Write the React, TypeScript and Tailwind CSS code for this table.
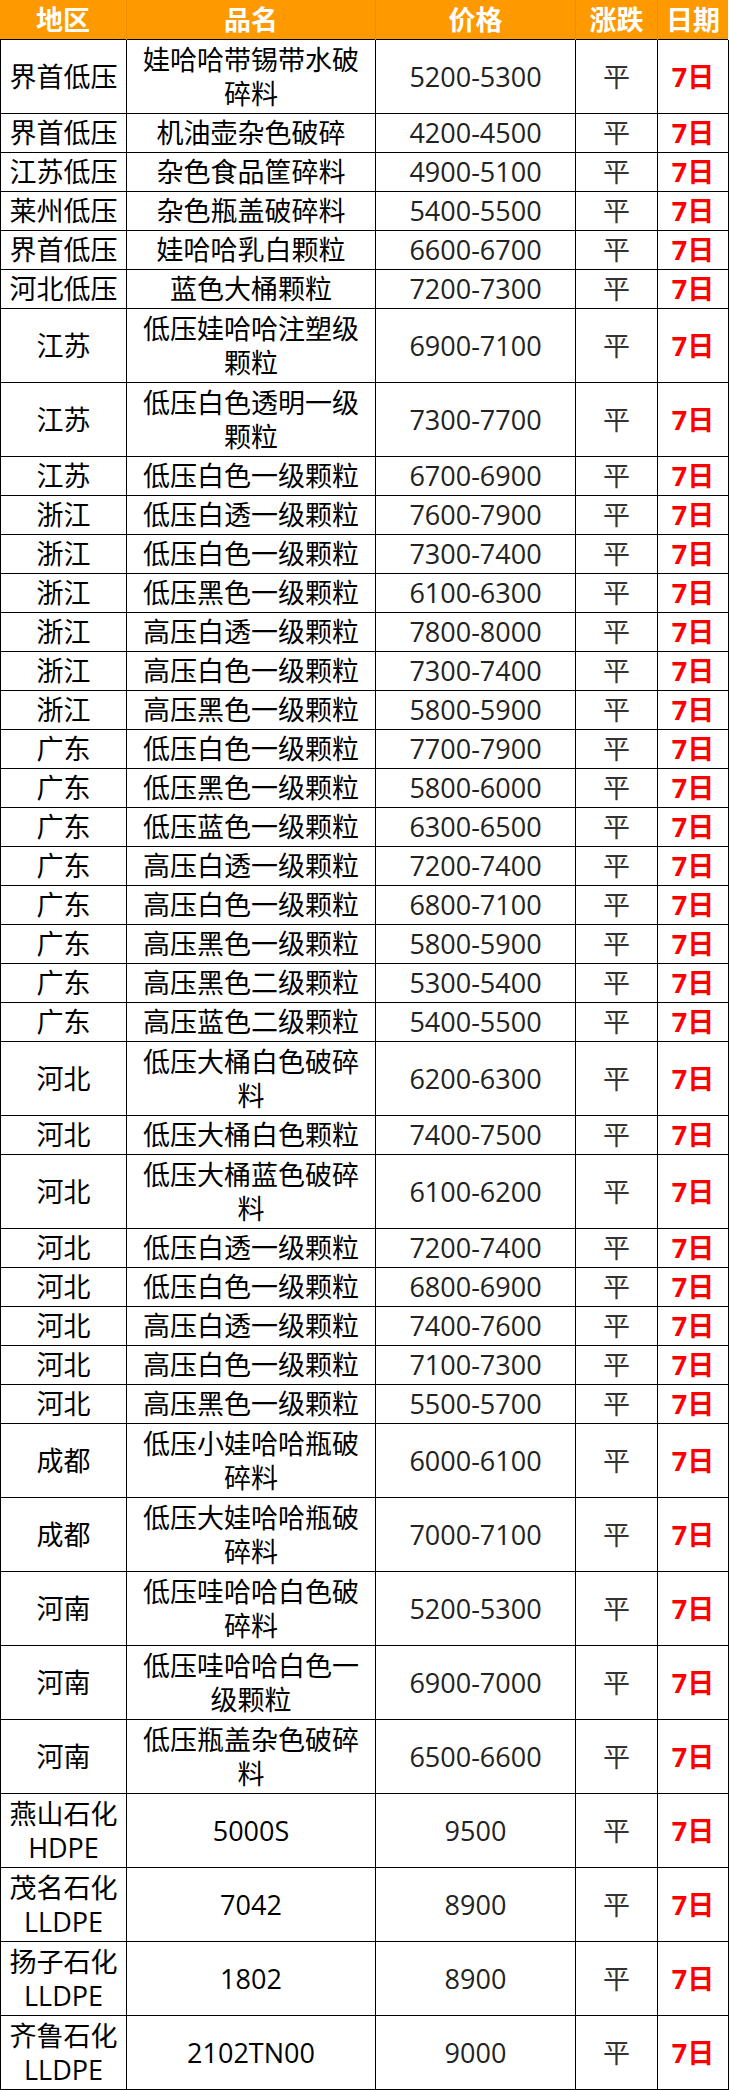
import React from "react";

type Row = { r: string[]; n: string[]; p: string; d?: boolean };

const rows: Row[] = [
  { r: ["界首低压"], n: ["娃哈哈带锡带水破", "碎料"], p: "5200-5300", d: true },
  { r: ["界首低压"], n: ["机油壶杂色破碎"], p: "4200-4500" },
  { r: ["江苏低压"], n: ["杂色食品筐碎料"], p: "4900-5100" },
  { r: ["莱州低压"], n: ["杂色瓶盖破碎料"], p: "5400-5500" },
  { r: ["界首低压"], n: ["娃哈哈乳白颗粒"], p: "6600-6700" },
  { r: ["河北低压"], n: ["蓝色大桶颗粒"], p: "7200-7300" },
  { r: ["江苏"], n: ["低压娃哈哈注塑级", "颗粒"], p: "6900-7100", d: true },
  { r: ["江苏"], n: ["低压白色透明一级", "颗粒"], p: "7300-7700", d: true },
  { r: ["江苏"], n: ["低压白色一级颗粒"], p: "6700-6900" },
  { r: ["浙江"], n: ["低压白透一级颗粒"], p: "7600-7900" },
  { r: ["浙江"], n: ["低压白色一级颗粒"], p: "7300-7400" },
  { r: ["浙江"], n: ["低压黑色一级颗粒"], p: "6100-6300" },
  { r: ["浙江"], n: ["高压白透一级颗粒"], p: "7800-8000" },
  { r: ["浙江"], n: ["高压白色一级颗粒"], p: "7300-7400" },
  { r: ["浙江"], n: ["高压黑色一级颗粒"], p: "5800-5900" },
  { r: ["广东"], n: ["低压白色一级颗粒"], p: "7700-7900" },
  { r: ["广东"], n: ["低压黑色一级颗粒"], p: "5800-6000" },
  { r: ["广东"], n: ["低压蓝色一级颗粒"], p: "6300-6500" },
  { r: ["广东"], n: ["高压白透一级颗粒"], p: "7200-7400" },
  { r: ["广东"], n: ["高压白色一级颗粒"], p: "6800-7100" },
  { r: ["广东"], n: ["高压黑色一级颗粒"], p: "5800-5900" },
  { r: ["广东"], n: ["高压黑色二级颗粒"], p: "5300-5400" },
  { r: ["广东"], n: ["高压蓝色二级颗粒"], p: "5400-5500" },
  { r: ["河北"], n: ["低压大桶白色破碎", "料"], p: "6200-6300", d: true },
  { r: ["河北"], n: ["低压大桶白色颗粒"], p: "7400-7500" },
  { r: ["河北"], n: ["低压大桶蓝色破碎", "料"], p: "6100-6200", d: true },
  { r: ["河北"], n: ["低压白透一级颗粒"], p: "7200-7400" },
  { r: ["河北"], n: ["低压白色一级颗粒"], p: "6800-6900" },
  { r: ["河北"], n: ["高压白透一级颗粒"], p: "7400-7600" },
  { r: ["河北"], n: ["高压白色一级颗粒"], p: "7100-7300" },
  { r: ["河北"], n: ["高压黑色一级颗粒"], p: "5500-5700" },
  { r: ["成都"], n: ["低压小娃哈哈瓶破", "碎料"], p: "6000-6100", d: true },
  { r: ["成都"], n: ["低压大娃哈哈瓶破", "碎料"], p: "7000-7100", d: true },
  { r: ["河南"], n: ["低压哇哈哈白色破", "碎料"], p: "5200-5300", d: true },
  { r: ["河南"], n: ["低压哇哈哈白色一", "级颗粒"], p: "6900-7000", d: true },
  { r: ["河南"], n: ["低压瓶盖杂色破碎", "料"], p: "6500-6600", d: true },
  { r: ["燕山石化", "HDPE"], n: ["5000S"], p: "9500", d: true },
  { r: ["茂名石化", "LLDPE"], n: ["7042"], p: "8900", d: true },
  { r: ["扬子石化", "LLDPE"], n: ["1802"], p: "8900", d: true },
  { r: ["齐鲁石化", "LLDPE"], n: ["2102TN00"], p: "9000", d: true },
];

const font = {
  fontFamily: '"Open Sans", "Noto Sans CJK SC", sans-serif',
};

function Lines({ lines }: { lines: string[] }) {
  return (
    <div className="flex flex-col items-center">
      {lines.map((l, i) => (
        <span key={i} className="whitespace-nowrap">
          {l}
        </span>
      ))}
    </div>
  );
}

export default function App() {
  const cell =
    "flex items-center justify-center text-center border-r border-black leading-[34px]";
  return (
    <div className="w-[730px] bg-white text-[27px] text-black" style={font}>
      <div className="w-[728px] h-[40px] grid grid-cols-[127px_249px_200px_82px_70px] bg-[#ff9900] border-b border-black font-bold text-white">
        <div className="flex items-center justify-center border-r border-[#ee8f00]">地区</div>
        <div className="flex items-center justify-center border-r border-[#ee8f00]">品名</div>
        <div className="flex items-center justify-center border-r border-[#ee8f00]">价格</div>
        <div className="flex items-center justify-center border-r border-[#ee8f00]">涨跌</div>
        <div className="flex items-center justify-center">日期</div>
      </div>
      {rows.map((row, i) => (
        <div
          key={i}
          className={
            "w-[729px] grid grid-cols-[126px_249px_200px_82px_71px] border-l border-b border-black " +
            (row.d ? "h-[74px]" : "h-[39px]")
          }
        >
          <div className={cell}>
            <Lines lines={row.r} />
          </div>
          <div className={cell}>
            <Lines lines={row.n} />
          </div>
          <div className={cell + " text-[#222]"}>{row.p}</div>
          <div className={cell + " text-[#333]"}>平</div>
          <div className={cell + " font-bold text-[#ff0000]"}>7日</div>
        </div>
      ))}
    </div>
  );
}
